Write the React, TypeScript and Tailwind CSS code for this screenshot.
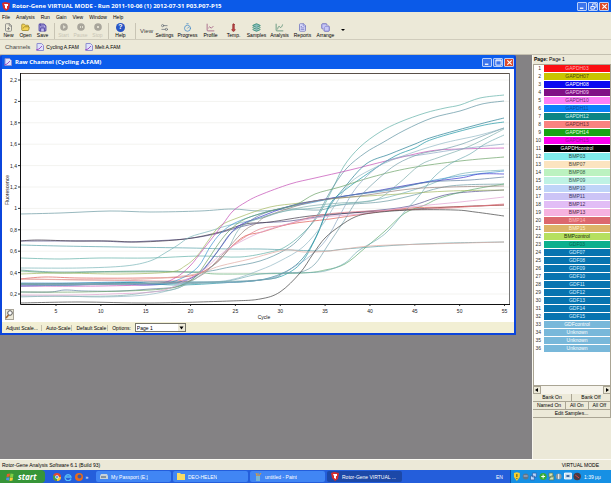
import type { ReactNode } from "react";
import { FilePlus, FolderOpen, Save, Settings2, Timer, ChartLine, Thermometer, Layers, ChartSpline, FileText, Copy } from "lucide-react";

type Curve = { color: string; points: number[] };

const samples: [string, string, string][] = [
  ["GAPDH03", "bg-[#fb0f12]", "text-[#ffb0b0]"],
  ["GAPDH07", "bg-[#c9c400]", "text-[#4c4a10]"],
  ["GAPDH08", "bg-[#0a08f0]", "text-white"],
  ["GAPDH09", "bg-[#800f85]", "text-[#f0d0f0]"],
  ["GAPDH10", "bg-[#fb80f6]", "text-[#703070]"],
  ["GAPDH11", "bg-[#0a80f8]", "text-[#0a4c98]"],
  ["GAPDH12", "bg-[#0b8583]", "text-[#d0f0f0]"],
  ["GAPDH13", "bg-[#fa8280]", "text-[#6a2c30]"],
  ["GAPDH14", "bg-[#18a315]", "text-[#e0ffe0]"],
  ["GAPDH15", "bg-[#fc02ee]", "text-[#9a1096]"],
  ["GAPDHcontrol", "bg-black", "text-white"],
  ["BMP03", "bg-[#80ecec]", "text-[#204848]"],
  ["BMP07", "bg-[#fce4c0]", "text-[#504838]"],
  ["BMP08", "bg-[#bcf2c0]", "text-[#386040]"],
  ["BMP09", "bg-[#bff2e4]", "text-[#386058]"],
  ["BMP10", "bg-[#bfd4f8]", "text-[#384868]"],
  ["BMP11", "bg-[#ccc4f6]", "text-[#403868]"],
  ["BMP12", "bg-[#e2bdf6]", "text-[#483058]"],
  ["BMP13", "bg-[#f6b2e0]", "text-[#502848]"],
  ["BMP14", "bg-[#dc686e]", "text-[#ffb8b8]"],
  ["BMP15", "bg-[#dcb468]", "text-[#fff0c8]"],
  ["BMPcontrol", "bg-[#b6e060]", "text-[#20300c]"],
  ["GDF03", "bg-[#0cb08e]", "text-[#086850]"],
  ["GDF07", "bg-[#0874b0]", "text-[#d4ecff]"],
  ["GDF08", "bg-[#0874b0]", "text-[#d4ecff]"],
  ["GDF09", "bg-[#0874b0]", "text-[#d4ecff]"],
  ["GDF10", "bg-[#0874b0]", "text-[#d4ecff]"],
  ["GDF11", "bg-[#0874b0]", "text-[#d4ecff]"],
  ["GDF12", "bg-[#0874b0]", "text-[#d4ecff]"],
  ["GDF13", "bg-[#0874b0]", "text-[#d4ecff]"],
  ["GDF14", "bg-[#0874b0]", "text-[#d4ecff]"],
  ["GDF15", "bg-[#0874b0]", "text-[#d4ecff]"],
  ["GDFcontrol", "bg-[#78b8da]", "text-white"],
  ["Unknown", "bg-[#78b8da]", "text-white"],
  ["Unknown", "bg-[#78b8da]", "text-white"],
  ["Unknown", "bg-[#78b8da]", "text-white"],
];

// Each list holds x, y pairs in chart coordinates.
const curves: Curve[] = [
  { color: "#6b9aa2", points: [20, 214, 60, 213, 110, 211, 150, 212, 200, 211, 232, 209, 260, 211, 290, 209, 320, 210, 340, 205, 380, 202, 410, 196, 450, 186, 504, 184] },
  { color: "#55508c", points: [20, 241, 60, 241, 100, 241, 125, 242, 150, 241, 185, 239, 215, 234, 240, 227, 260, 223, 290, 221, 330, 215, 370, 211, 410, 206, 450, 194, 504, 190] },
  { color: "#403848", points: [20, 241, 38, 240, 75, 241, 110, 241, 140, 242, 185, 239, 220, 232, 245, 224, 270, 222, 310, 216, 350, 213, 400, 210, 450, 207, 504, 205] },
  { color: "#58a0a8", points: [20, 245, 60, 246, 120, 247, 190, 248, 230, 249, 260, 249, 290, 250, 325, 251, 345, 249, 400, 245, 450, 243, 504, 242] },
  { color: "#62b0a8", points: [20, 258, 60, 259, 100, 258, 150, 258, 200, 256, 240, 257, 270, 252, 285, 247, 302, 234, 318, 216, 332, 190, 344, 166, 360, 147, 380, 132, 400, 122, 425, 113, 445, 108, 460, 105, 480, 98, 504, 95] },
  { color: "#78b4b8", points: [20, 268, 80, 268, 125, 266, 150, 261, 165, 253, 178, 245, 190, 237, 210, 231, 230, 225, 262, 218, 285, 211, 315, 208, 345, 204, 380, 199, 420, 188, 460, 174, 504, 170] },
  { color: "#5e92a0", points: [20, 270, 60, 272, 150, 271, 200, 272, 230, 267, 260, 261, 285, 250, 301, 237, 318, 214, 330, 192, 346, 169, 365, 153, 382, 143, 405, 130, 432, 118, 460, 111, 482, 104, 504, 101] },
  { color: "#60aa70", points: [20, 271, 60, 273, 100, 272, 190, 272, 220, 274, 300, 273, 325, 270, 345, 264, 365, 248, 385, 231, 405, 213, 425, 205, 440, 198, 470, 190, 504, 184] },
  { color: "#a4b860", points: [20, 274, 60, 273, 120, 274, 170, 272, 185, 266, 197, 256, 208, 241, 220, 226, 240, 217, 270, 207, 300, 203, 340, 198, 400, 194, 450, 191, 504, 190] },
  { color: "#e05a52", points: [20, 279, 45, 277, 80, 278, 140, 278, 190, 276, 215, 264, 230, 248, 245, 236, 262, 232, 290, 224, 330, 219, 370, 213, 410, 208, 450, 207, 504, 205] },
  { color: "#e27884", points: [20, 279, 100, 280, 170, 281, 190, 278, 208, 269, 222, 257, 235, 244, 260, 229, 285, 225, 315, 216, 350, 212, 400, 210, 450, 208, 504, 204] },
  { color: "#c34cb4", points: [20, 286, 100, 286, 155, 284, 175, 278, 190, 266, 202, 251, 213, 237, 223, 224, 233, 211, 246, 202, 260, 195, 290, 184, 315, 178, 350, 170, 390, 160, 430, 151, 460, 149, 504, 148] },
  { color: "#3f92d0", points: [20, 283, 70, 283, 130, 282, 160, 284, 180, 279, 198, 267, 210, 247, 221, 233, 237, 222, 270, 211, 310, 203, 345, 196, 390, 190, 430, 181, 460, 176, 504, 171] },
  { color: "#3430cc", points: [20, 286, 70, 285, 120, 284, 150, 285, 180, 282, 198, 274, 211, 260, 223, 244, 237, 227, 260, 217, 290, 206, 320, 200, 370, 192, 420, 183, 460, 178, 480, 174, 504, 174] },
  { color: "#267f95", points: [20, 284, 100, 283, 150, 282, 210, 282, 240, 282, 265, 279, 287, 271, 303, 258, 316, 237, 328, 209, 344, 188, 366, 164, 390, 154, 415, 144, 433, 137, 480, 124, 504, 118] },
  { color: "#1d95a4", points: [20, 284, 65, 285, 130, 283, 180, 285, 235, 282, 260, 280, 282, 276, 302, 262, 318, 233, 330, 204, 345, 190, 370, 172, 395, 156, 415, 148, 433, 139, 480, 126, 504, 122] },
  { color: "#6180a0", points: [20, 292, 50, 292, 65, 290, 85, 291, 120, 291, 150, 289, 175, 287, 191, 280, 205, 268, 218, 251, 230, 234, 245, 224, 265, 213, 300, 204, 340, 197, 390, 189, 430, 182, 470, 180, 504, 177] },
  { color: "#92b8c4", points: [20, 297, 60, 296, 100, 297, 145, 295, 175, 289, 190, 284, 230, 280, 260, 270, 280, 261, 303, 247, 323, 224, 335, 205, 350, 183, 370, 170, 400, 157, 440, 144, 480, 135, 504, 128] },
  { color: "#6ca267", points: [20, 292, 80, 292, 150, 290, 180, 286, 196, 276, 207, 261, 219, 243, 230, 230, 245, 219, 270, 211, 295, 205, 315, 194, 340, 187, 372, 177, 410, 168, 460, 161, 504, 157] },
  { color: "#95807a", points: [20, 284, 100, 284, 180, 282, 200, 276, 213, 265, 230, 246, 245, 230, 257, 223, 265, 217, 290, 208, 320, 200, 360, 196, 410, 189, 450, 187, 504, 186] },
  { color: "#8ca8c4", points: [20, 286, 120, 284, 190, 283, 240, 282, 275, 277, 297, 265, 310, 256, 326, 240, 340, 215, 356, 188, 380, 165, 400, 157, 420, 155, 460, 149, 504, 144] },
  { color: "#759fab", points: [20, 284, 120, 284, 260, 280, 283, 273, 301, 272, 315, 264, 328, 245, 344, 221, 358, 199, 377, 180, 397, 164, 420, 154, 440, 150, 462, 144, 480, 137, 504, 128] },
  { color: "#73adb3", points: [20, 284, 150, 284, 220, 282, 260, 274, 300, 273, 325, 271, 345, 263, 358, 251, 378, 239, 390, 229, 406, 210, 419, 196, 433, 178, 450, 164, 470, 154, 485, 144, 504, 135] },
  { color: "#80afad", points: [20, 296, 110, 296, 150, 292, 178, 288, 206, 271, 225, 254, 240, 228, 260, 218, 285, 211, 310, 206, 340, 203, 375, 200, 398, 184, 420, 165, 440, 157, 470, 146, 504, 129] },
  { color: "#e0a0d0", points: [20, 295, 70, 295, 110, 294, 160, 291, 186, 280, 205, 269, 220, 255, 240, 242, 270, 229, 315, 218, 360, 214, 410, 207, 460, 202, 504, 197] },
  { color: "#e0aaa2", points: [20, 279, 120, 280, 190, 275, 220, 266, 250, 259, 285, 250, 304, 252, 330, 251, 370, 246, 430, 244, 504, 242] },
  { color: "#404040", points: [20, 303, 80, 302, 150, 303, 230, 301, 260, 299, 280, 292, 300, 273, 313, 254, 325, 238, 340, 226, 355, 217, 372, 213, 410, 210, 455, 210, 475, 212, 504, 216] },
];

function smooth(p: number[]) {
  let d = `M${p[0]} ${p[1]}`;
  for (let i = 0; i < p.length - 2; i += 2) {
    const px = p[i - 2] ?? p[i];
    const py = p[i - 1] ?? p[i + 1];
    const nx = p[i + 4] ?? p[i + 2];
    const ny = p[i + 5] ?? p[i + 3];
    d += `C${p[i] + (p[i + 2] - px) / 6} ${p[i + 1] + (p[i + 3] - py) / 6} ${p[i + 2] - (nx - p[i]) / 6} ${p[i + 3] - (ny - p[i + 1]) / 6} ${p[i + 2]} ${p[i + 3]}`;
  }
  return d;
}

function Chart() {
  const ys = ["2,2", "2", "1,8", "1,6", "1,4", "1,2", "1", "0,8", "0,6", "0,4", "0,2"];
  const xs = [5, 10, 15, 20, 25, 30, 35, 40, 45, 50, 55];
  return (
    <svg viewBox="2 69 512 253" className="block w-full bg-white font-['Liberation_Sans',sans-serif] text-[5px]" role="img" aria-label="Fluorescence by cycle">
      {ys.map((label, i) => {
        const y = 80 + i * 21.4;
        return (
          <g key={label}>
            <path d={`M20 ${y}H509`} stroke="#f3f3f0" strokeWidth="1" />
            <path d={`M18 ${y}h2`} stroke="#333" strokeWidth="1" />
            <text x="17" y={y + 2} textAnchor="end" fill="#222">{label}</text>
          </g>
        );
      })}
      {xs.map((label) => {
        const x = 56 + (label - 5) * 8.97;
        return (
          <g key={label}>
            <path d={`M${x} 304v2`} stroke="#333" strokeWidth="1" />
            <text x={x} y="313" textAnchor="middle" fill="#222">{label}</text>
          </g>
        );
      })}
      {curves.map((c, i) => (
        <path key={i} d={smooth(c.points)} fill="none" stroke={c.color} strokeWidth="0.7" />
      ))}
      <path d="M20.5 73.5H509" stroke="#5a5048" fill="none" />
      <path d="M509.5 73V304" stroke="#777" fill="none" />
      <path d="M20.5 73V304.5H510" stroke="#111" fill="none" />
      <text transform="translate(9 205) rotate(-90)" fill="#111">Fluorescence</text>
      <text x="264" y="319" textAnchor="middle" fill="#111">Cycle</text>
      <rect x="5.500" y="309.500" width="8" height="10" fill="#ece9d8" stroke="#a8a498" />
      <circle cx="10" cy="313" r="2.300" fill="#fff" stroke="#555" />
      <path d="M8.500 315l-2.500 3" stroke="#a3632c" strokeWidth="1.500" />
    </svg>
  );
}

function WindowButtons({ restore }: { restore?: boolean }) {
  const base = "flex h-[9px] w-[10px] items-center justify-center rounded-[1px] border border-[#b8cffa]";
  return (
    <div className="flex gap-px">
      <button aria-label="Minimize" className={`${base} bg-[#3b74ec]`}>
        <svg viewBox="0 0 8 8" className="size-[7px]"><path d="M1 6h4" stroke="#fff" strokeWidth="1.500" /></svg>
      </button>
      <button aria-label={restore ? "Restore" : "Maximize"} className={`${base} bg-[#3b74ec]`}>
        <svg viewBox="0 0 8 8" className="size-[7px]" fill="none" stroke="#fff">
          {restore ? <path d="M1 4h4v3H1zM3 3V1h4v4H6" /> : <path d="M1 1h6v6H1zM1 2h6" />}
        </svg>
      </button>
      <button aria-label="Close" className={`${base} bg-[#de4a28]`}>
        <svg viewBox="0 0 8 8" className="size-[7px]"><path d="M1.500 1.500l5 5m0-5l-5 5" stroke="#fff" strokeWidth="1.400" /></svg>
      </button>
    </div>
  );
}

function Tool({ label, wide, disabled, children }: { label: string; wide?: boolean; disabled?: boolean; children: ReactNode }) {
  return (
    <button disabled={disabled} className={`flex h-[17px] shrink-0 flex-col items-center justify-start whitespace-nowrap leading-[6px] ${wide ? "w-[23px]" : "w-[17px]"} ${disabled ? "text-[#c8c4b4]" : "text-black"}`}>
      <span className="flex h-[10px] items-center">{children}</span>
      {label}
    </button>
  );
}

function Logo() {
  return (
    <svg viewBox="0 0 8 9" className="h-[9px] w-2 shrink-0">
      <path d="M0 1l3-1 5 1-1 6-3 2-3-3z" fill="#d62b2b" />
      <path d="M2 2h4v2H5v3L3 6V4z" fill="#fff" />
    </svg>
  );
}

function ChannelIcon() {
  return (
    <svg viewBox="0 0 8 8" className="size-2 shrink-0">
      <path d="M1 .5h4.500L7.500 2.500v5h-6.500z" fill="#dfe2fb" stroke="#8f8fd0" />
      <path d="M0 7l3-1 3-3" fill="none" stroke="#9d53c5" />
    </svg>
  );
}

function Disabled({ d }: { d: string }) {
  return (
    <svg viewBox="0 0 8 8" className="size-2">
      <circle cx="4" cy="4" r="3.800" fill="#a8a59b" />
      <path d={d} fill="#e0ddd0" />
    </svg>
  );
}

function Divider() {
  return <span className="h-4 w-px shrink-0 bg-[#c8c4b4]" />;
}

function Task({ label, active, children }: { label: string; active?: boolean; children: ReactNode }) {
  return (
    <button className={`flex h-[11px] min-w-0 max-w-[75px] flex-1 items-center gap-[3px] whitespace-nowrap rounded-[2px] px-1 text-white ${active ? "bg-[#1c48a8]" : "bg-[#4186f4]"}`}>
      {children}
      <span className="truncate">{label}</span>
    </button>
  );
}

function SidePanel() {
  const btn = "h-2 flex-auto border-b border-r border-[#aaa594] text-center leading-[7px] whitespace-nowrap";
  return (
    <aside className="flex w-[79px] shrink-0 flex-col border-l border-[#f8f6ee] bg-[#ece9d8]">
      <div className="h-[9px] px-px leading-2"><b>Page:</b> Page 1</div>
      <ol className="h-[322px] border border-[#aaa594] bg-white">
        {samples.map(([name, bg, fg], i) => (
          <li key={i} className="flex h-2 items-start leading-[7px]">
            <span className="w-[10px] shrink-0 pr-[3px] text-right text-[#333]">{i + 1}</span>
            <button className={`h-[7px] min-w-0 flex-1 text-center leading-[7px] ${bg} ${fg}`}>{name}</button>
          </li>
        ))}
      </ol>
      <div className="flex h-2 justify-between bg-[#f6f4ec] text-black">
        <button aria-label="Scroll left" className="flex w-2 items-center justify-center border border-[#aaa594] bg-[#ece9d8]">
          <svg viewBox="0 0 4 4" className="size-1"><path d="M3 0v4L0 2z" /></svg>
        </button>
        <button aria-label="Scroll right" className="flex w-2 items-center justify-center border border-[#aaa594] bg-[#ece9d8]">
          <svg viewBox="0 0 4 4" className="size-1"><path d="M1 0v4l3-2z" /></svg>
        </button>
      </div>
      <div className="flex"><button className={btn}>Bank On</button><button className={btn}>Bank Off</button></div>
      <div className="flex"><button className={btn}>Named On</button><button className={btn}>All On</button><button className={btn}>All Off</button></div>
      <div className="flex"><button className={btn}>Edit Samples...</button></div>
    </aside>
  );
}

export default function App() {
  const icon = "size-[9px]";
  return (
    <div className="flex h-screen min-h-[440px] flex-col overflow-hidden bg-[#ece9d8] font-['Liberation_Sans',Arial,sans-serif] text-[5px] leading-[6px] text-black">
      <header className="flex h-3 shrink-0 items-center gap-[2px] bg-[#0b5ae8] pl-[2px] pr-[2px] text-white">
        <Logo />
        <h1 className="flex-1 truncate font-['Open_Sans',sans-serif] text-[6px] font-bold leading-[10px]">Rotor-Gene VIRTUAL MODE - Run 2011-10-06 (1) 2012-07-31 P03.P07-P15</h1>
        <WindowButtons restore />
      </header>
      <nav className="flex h-[10px] shrink-0 items-center gap-[6px] px-[2px]">
        {["File", "Analysis", "Run", "Gain", "View", "Window", "Help"].map((m) => <button key={m}>{m}</button>)}
      </nav>
      <div className="flex h-[18px] shrink-0 items-center border-b border-[#d0ccbc] text-[5px]">
        <Tool label="New"><FilePlus className={icon} color="#777" strokeWidth={2} /></Tool>
        <Tool label="Open"><FolderOpen className={icon} color="#9a8020" fill="#f4d458" /></Tool>
        <Tool label="Save"><Save className={icon} color="#5b50a8" fill="#c4bdf0" strokeWidth={3} /></Tool>
        <div className="flex items-center pl-[3px]"><Divider />
          <Tool label="Start" disabled><Disabled d="M3 2l3 2-3 2z" /></Tool>
          <Tool label="Pause" disabled><Disabled d="M3 3h1v2H3zM5 3h1v2H5z" /></Tool>
          <Tool label="Stop" disabled><Disabled d="M3 3h2v2H3z" /></Tool>
        </div>
        <div className="flex items-center pl-[2px]"><Divider />
          <Tool label="Help" wide><span className="flex size-[9px] items-center justify-center rounded-full bg-[#2855c5] text-[7px] font-bold text-white">?</span></Tool>
          <span className="w-[3px]" /><Divider />
        </div>
        <span className="w-[17px] text-right text-[6px] text-[#444]">View</span>
        <Tool label="Settings" wide><Settings2 className={icon} color="#687078" /></Tool>
        <Tool label="Progress" wide><Timer className={icon} color="#4088c8" /></Tool>
        <Tool label="Profile" wide><ChartLine className={icon} color="#994d78" /></Tool>
        <Tool label="Temp." wide><Thermometer className={icon} color="#9a3434" fill="#b44" /></Tool>
        <Tool label="Samples" wide><Layers className={icon} color="#25846c" fill="#8bb" /></Tool>
        <Tool label="Analysis" wide><ChartSpline className={icon} color="#48846a" /></Tool>
        <Tool label="Reports" wide><FileText className={icon} color="#6b70bc" fill="#e0e0ff" /></Tool>
        <Tool label="Arrange" wide><Copy className={icon} color="#5454b8" fill="#c8c8f6" /></Tool>
        <svg viewBox="0 0 4 3" className="ml-1 h-[3px] w-1"><path d="M0 0h4L2 2z" /></svg>
      </div>
      <div className="flex h-[15px] shrink-0 items-center gap-[6px] border-b border-[#c4c0b0] pl-[5px]">
        <span className="text-[6px] text-[#444]">Channels</span>
        <button className="flex items-center gap-[2px]"><ChannelIcon />Cycling A.FAM</button>
        <button className="flex items-center gap-[2px]"><ChannelIcon />Melt A.FAM</button>
      </div>

      <div className="flex min-h-0 flex-1">
        <main className="min-w-0 flex-1 bg-[#848284]">
          <section className="w-[516px] max-w-full rounded-t-[2px] border-2 border-t-0 border-[#0b45dc] bg-[#ece9d8]">
            <div className="flex h-[14px] items-center gap-[3px] bg-[#0b5cec] pl-[2px] text-white">
              <ChannelIcon />
              <h2 className="flex-1 truncate font-['Open_Sans',sans-serif] text-[6px] font-bold leading-[10px]">Raw Channel (Cycling A.FAM)</h2>
              <WindowButtons />
            </div>
            <Chart />
            <div className="flex h-[11px] items-center gap-1 bg-[#f2efd4] px-1 whitespace-nowrap">
              <button className="w-[36px] border-r border-[#c4c0ac] text-left">Adjust Scale...</button>
              <button className="border-r border-[#c4c0ac] pr-px">Auto-Scale</button>
              <button className="border-r border-[#c4c0ac] pr-px">Default Scale</button>
              <label htmlFor="page">Options:</label>
              <div className="relative h-[9px] w-[51px]">
                <select id="page" className="block h-[9px] w-full appearance-none border border-[#77766a] bg-white px-px leading-[6px]">
                  <option>Page 1</option>
                </select>
                <svg viewBox="0 0 7 7" className="pointer-events-none absolute right-px top-px size-[7px] bg-[#ece9d8]"><path d="M1.500 2.500h4l-2 3z" /></svg>
              </div>
            </div>
          </section>
        </main>
        <SidePanel />
      </div>

      <div className="flex h-[11px] shrink-0 items-center justify-between border-t border-[#fbfaf4] pl-[2px] pr-3">
        <span>Rotor-Gene Analysis Software 6.1 (Build 93)</span>
        <span>VIRTUAL MODE</span>
      </div>
      <footer className="flex h-[13px] shrink-0 items-center bg-[#245edb]">
        <button className="flex h-full w-[45px] shrink-0 items-center gap-1 rounded-r-[4px] bg-[#379538] pl-[6px] font-['Open_Sans',sans-serif] text-[8px] font-bold italic leading-[10px] text-white">
          <svg viewBox="0 0 8 8" className="size-2">
            <path d="M1 1l3-.5-.5 3L.500 4z" fill="#ee5b2c" /><path d="M4.500.500l3 .5-.5 3H4z" fill="#7ed044" /><path d="M.500 4.500h3L3 7.500 0 7z" fill="#4b91ee" /><path d="M4 4.500h3l-.5 3-3 .5z" fill="#f7ce36" />
          </svg>
          start
        </button>
        <div className="flex w-[51px] shrink-0 items-center justify-center gap-[3px]">
          <svg viewBox="0 0 8 8" className="size-2"><circle cx="4" cy="4" r="4" fill="#e24830" /><path d="M4 4L.500 2A4 4 0 004 8z" fill="#3da34a" /><path d="M4 4h4a4 4 0 01-4 4z" fill="#f4cb35" /><circle cx="4" cy="4" r="1.600" fill="#5a9cf0" stroke="#fff" strokeWidth=".6" /></svg>
          <svg viewBox="0 0 8 8" className="size-2"><path d="M7 5.500A3 3 0 117 4H2" fill="none" stroke="#58bdf6" strokeWidth="1.300" /></svg>
          <svg viewBox="0 0 8 8" className="size-2"><circle cx="4" cy="4" r="4" fill="#e86a1c" /><circle cx="4.500" cy="3.500" r="2" fill="#3c5cab" /></svg>
          <span className="text-white">»</span>
        </div>
        <div className="flex min-w-0 flex-1 gap-[2px]">
          <Task label="My Passport (E:)"><svg viewBox="0 0 8 5" className="h-[5px] w-2 shrink-0"><path d="M1 0h6l1 2v3H0V2z" fill="#c6d2da" /><path d="M1 3h5" stroke="#456" /></svg></Task>
          <Task label="DEO-HELEN"><svg viewBox="0 0 8 7" className="h-[7px] w-2 shrink-0"><path d="M0 0h3l1 1h4v6H0z" fill="#f7db65" /></svg></Task>
          <Task label="untitled - Paint"><svg viewBox="0 0 8 8" className="size-2 shrink-0"><path d="M2 3h4v5H2z" fill="#77b5d8" /><path d="M3 3L2 0m2 3V0m1 3l2-3" stroke="#e29c35" /></svg></Task>
          <Task label="Rotor-Gene VIRTUAL ..." active><Logo /></Task>
        </div>
        <span className="w-[14px] shrink-0 text-white">EN</span>
        <div className="flex h-full w-[101px] shrink-0 items-center gap-px border-l border-[#0e4fa8] bg-[#1690e4] pl-[2px] text-white">
          <svg viewBox="0 0 72 9" className="h-[9px] w-[70px]">
            <path d="M1 1l3-1 3 1v4L4 9 1 5z" fill="#f6cf30" /><path d="M4 2v3m0 1v1" stroke="#5a4a00" />
            <circle cx="13" cy="4.500" r="3" fill="#5f7788" /><path d="M11 4h4" stroke="#bbd" />
            <path d="M20 1h4v4h-4zM18 4h4v4h-4z" fill="#b8d8ff" stroke="#2858a0" strokeWidth=".7" />
            <circle cx="31" cy="4.500" r="3.700" fill="#35ab35" /><path d="M29 4.500h4m-2-2v4" stroke="#fff" />
            <path d="M37 1h4v4h-4zM39 4h3v4h-5z" fill="#d5e2b4" stroke="#587850" strokeWidth=".7" />
            <circle cx="47" cy="4.500" r="3" fill="#8a98a2" /><path d="M47 2v5" stroke="#fff" />
            <path d="M53 1h7v6h-7z" fill="#c6dcef" stroke="#fff" /><path d="M55 3h3v2h-3z" fill="#3868a0" />
            <circle cx="66" cy="4.500" r="3.800" fill="#493b46" /><path d="M64 3l4 3" stroke="#d44" />
          </svg>
          <time className="whitespace-nowrap">1:39 μμ</time>
        </div>
      </footer>
    </div>
  );
}
